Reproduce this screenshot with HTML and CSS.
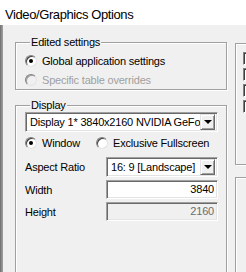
FILE: index.html
```html
<!DOCTYPE html>
<html lang="en">
<head>
  <meta charset="UTF-8" />
  <title>Video/Graphics Options</title>
  <link rel="stylesheet" href="styles.css">
</head>
<body>
  <div class="window">
    <div class="titlebar">Video/Graphics Options</div>
    <div class="frame">
      <div class="edge"></div>
      <div class="col-left">
        <fieldset class="group edited">
          <legend>Edited settings</legend>
          <div class="opt">
            <span class="radio checked"></span>
            <span>Global application settings</span>
          </div>
          <div class="opt disabled">
            <span class="radio"></span>
            <span>Specific table overrides</span>
          </div>
        </fieldset>

        <fieldset class="group display">
          <legend>Display</legend>
          <div class="combo full">
            <span class="combo-text">Display 1* 3840x2160 NVIDIA GeForce RTX</span>
            <span class="combo-btn"><i class="arrow"></i></span>
          </div>
          <div class="radio-row">
            <div class="opt">
              <span class="radio checked"></span>
              <span>Window</span>
            </div>
            <div class="opt">
              <span class="radio"></span>
              <span>Exclusive Fullscreen</span>
            </div>
          </div>
          <div class="field-row aspect">
            <span class="field-label">Aspect Ratio</span>
            <div class="combo">
              <span class="combo-text">16: 9 [Landscape]</span>
              <span class="combo-btn"><i class="arrow"></i></span>
            </div>
          </div>
          <div class="field-row width">
            <span class="field-label">Width</span>
            <div class="textbox">3840</div>
          </div>
          <div class="field-row height">
            <span class="field-label">Height</span>
            <div class="textbox disabled">2160</div>
          </div>
        </fieldset>
      </div>

      <div class="col-right">
        <fieldset class="group side-top">
          <legend>Rendering</legend>
          <span class="check"></span>
          <span class="check"></span>
          <span class="check"></span>
          <span class="check"></span>
        </fieldset>
        <fieldset class="group side-bottom">
          <legend>Performance</legend>
        </fieldset>
      </div>
    </div>
  </div>
</body>
</html>
```

FILE: styles.css
```css
* {
  margin: 0;
  padding: 0;
  box-sizing: border-box;
}

body {
  width: 246px;
  height: 272px;
  overflow: hidden;
  background: #f0f0f0;
  font-family: 'Liberation Sans', Arial, sans-serif;
  font-size: 11px;
  letter-spacing: -0.2px;
  color: #000;
}

.window {
  width: 246px;
  height: 272px;
  display: flex;
  flex-direction: column;
}

.titlebar {
  height: 25px;
  flex-shrink: 0;
  background: #fff;
  padding: 8px 0 0 5px;
  font-size: 13px;
  letter-spacing: -0.4px;
  line-height: 14px;
  color: #000;
}

.frame {
  flex: 1;
  display: flex;
  overflow: hidden;
}

.edge {
  width: 3px;
  flex-shrink: 0;
  background: linear-gradient(to right, #6e6e6e, #8a8a8a, #a4a4a4);
}

.col-left {
  width: 212px;
  margin-left: 12px;
  flex-shrink: 0;
}

.col-right {
  width: 120px;
  margin-left: 8px;
  flex-shrink: 0;
}

/* group boxes, etched border */
.group {
  border: 1px solid #a0a0a0;
  box-shadow: inset 1px 1px #fff, 1px 1px #fff;
  padding: 0 8px 0 9px;
}

.group legend {
  margin-left: 5px;
  padding: 0 1px;
  line-height: 13px;
  background: #f0f0f0;
}

.edited {
  margin-top: 11px;
  height: 54px;
  padding-top: 2px;
}

.display {
  margin-top: 9px;
  height: 200px;
}

.opt {
  display: flex;
  align-items: center;
  height: 19px;
  white-space: nowrap;
}

.opt.disabled {
  color: #a0a0a0;
}

.radio {
  width: 12px;
  height: 12px;
  border-radius: 50%;
  margin-right: 5px;
  flex-shrink: 0;
  background: #fff;
  border: 1px solid;
  border-color: #808080 #e3e3e3 #e3e3e3 #808080;
  box-shadow: inset 1px 1px #404040;
  display: flex;
  align-items: center;
  justify-content: center;
}

.opt.disabled .radio {
  background: #f0f0f0;
  box-shadow: inset 1px 1px #a0a0a0;
}

.radio.checked::after {
  content: '';
  width: 4px;
  height: 4px;
  border-radius: 50%;
  background: #000;
}

/* combo boxes and text boxes, sunken */
.combo,
.textbox {
  height: 20px;
  background: #fff;
  border: 1px solid;
  border-color: #a0a0a0 #fff #fff #a0a0a0;
  box-shadow: inset 1px 1px #696969, inset -1px -1px #e3e3e3;
}

.combo {
  display: flex;
  align-items: center;
  padding: 2px 2px 2px 4px;
  width: 112px;
}

.combo.full {
  width: 193px;
}

.combo-text {
  flex: 1;
  overflow: hidden;
  white-space: nowrap;
  line-height: 14px;
}

.combo-btn {
  width: 15px;
  height: 16px;
  flex-shrink: 0;
  background: #f0f0f0;
  border: 1px solid;
  border-color: #e3e3e3 #696969 #696969 #e3e3e3;
  box-shadow: inset 1px 1px #fff, inset -1px -1px #a0a0a0;
  display: flex;
  align-items: center;
  justify-content: center;
}

.arrow {
  width: 0;
  height: 0;
  border-left: 4px solid transparent;
  border-right: 4px solid transparent;
  border-top: 4px solid #000;
}

.radio-row {
  display: flex;
  margin-top: 2px;
  height: 18px;
}

.radio-row .opt {
  height: 18px;
  width: 71px;
}

.field-row {
  display: flex;
  align-items: center;
}

.field-label {
  width: 81px;
  flex-shrink: 0;
}

.aspect {
  margin-top: 5px;
}

.width {
  margin-top: 3px;
}

.height {
  margin-top: 3px;
}

.textbox {
  width: 112px;
  height: 19px;
  text-align: right;
  padding: 0 3px;
  line-height: 17px;
}

.textbox.disabled {
  background: #f0f0f0;
  color: #6d6d6d;
}

.side-top {
  margin-top: 12px;
  height: 128px;
  padding: 2px 0 0 7px;
  display: flex;
  flex-direction: column;
  gap: 3px;
}

.side-top legend {
  margin-left: 3px;
}

.check {
  width: 13px;
  height: 13px;
  background: #fff;
  border: 1px solid;
  border-color: #808080 #fff #fff #808080;
  box-shadow: inset 1px 1px #404040;
}

.side-bottom {
  margin-top: 6px;
  height: 120px;
}

.side-bottom legend {
  margin-left: 3px;
}
```
